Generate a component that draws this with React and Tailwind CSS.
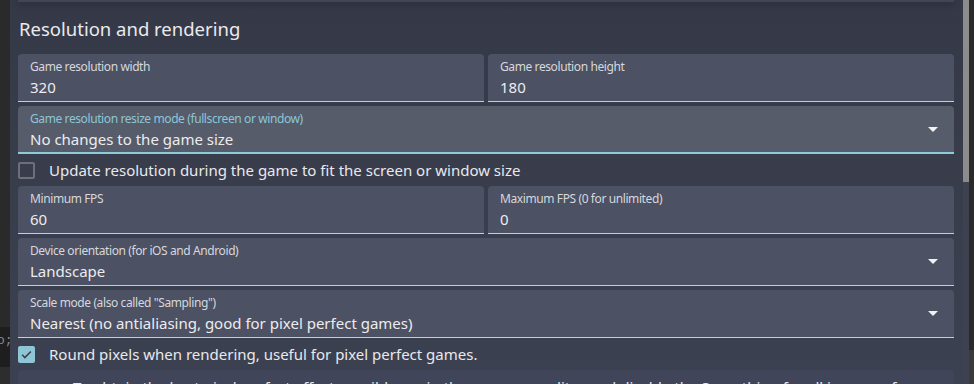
import React from "react";

const font = { fontFamily: '"Noto Sans", "Open Sans", sans-serif' };

function Field({ label, value, focused, select }) {
  return (
    <div
      className={`relative min-w-0 flex-1 h-[48px] rounded-t-[4px] px-3 pt-[5px] ${
        focused
          ? "bg-[#575c6b] border-b-2 border-[#8ccbd9]"
          : "bg-[#4c5163] border-b border-[#c9ccd2]"
      }`}
    >
      <div
        className={`text-[12px] leading-[16px] tracking-[-0.4px] whitespace-nowrap ${
          focused ? "text-[#8cc6d6]" : "text-[#d6d8dd]"
        }`}
      >
        {label}
      </div>
      <div className="mt-[2px] text-[15px] leading-[20px] text-[#ececee] whitespace-nowrap">
        {value}
      </div>
      {select && (
        <svg
          className="absolute right-[16px] top-[21px]"
          width="10"
          height="6"
          viewBox="0 0 10 6"
        >
          <polygon points="0,0 10,0 5,5" fill="#f2f2f2" />
        </svg>
      )}
    </div>
  );
}

function Check({ checked, label }) {
  return (
    <div className="flex h-[32px] items-center gap-[14px]">
      {checked ? (
        <div className="flex h-[17px] w-[17px] shrink-0 items-center justify-center rounded-[2px] bg-[#8fc6d5]">
          <svg width="13" height="13" viewBox="0 0 24 24">
            <path
              d="M4 12.5l5 5L20 6.5"
              fill="none"
              stroke="#3b404e"
              strokeWidth="3"
            />
          </svg>
        </div>
      ) : (
        <div className="h-[17px] w-[17px] shrink-0 rounded-[2px] border-2 border-[#6c707a]" />
      )}
      <span className="text-[15px] text-[#e8e9ec] whitespace-nowrap">
        {label}
      </span>
    </div>
  );
}

export default function App() {
  return (
    <div
      className="flex h-[384px] w-[974px] overflow-hidden bg-[#2b2b2b]"
      style={font}
    >
      {/* editor behind the dialog */}
      <div className="flex w-[10px] shrink-0 flex-col">
        <div className="h-[327px] shrink-0 bg-[#2a2a2a]" />
        <div className="h-[40px] shrink-0 overflow-hidden bg-[#1e1e1e] pt-[6px] font-mono text-[13px] leading-[16px] text-[#8a8a8a]">
          <span className="-ml-[3px]">o;</span>
        </div>
        <div className="flex-1 bg-[#2d2d2d]" />
      </div>

      <div className="flex min-w-0 flex-1 bg-gradient-to-b from-[#353947] to-[#3c4151]">
        <div className="min-w-0 flex-1 overflow-hidden pl-2 pr-[9px]">
          <div className="h-[2px] bg-[#414655] shadow-[0_2px_6px_rgba(0,0,0,0.45)]" />
          <div className="h-[52px] pt-[14px] pl-px text-[18.5px] leading-[26px] text-[#e9eaed]">
            Resolution and rendering
          </div>

          <div className="flex gap-1">
            <Field label="Game resolution width" value="320" />
            <Field label="Game resolution height" value="180" />
          </div>
          <div className="mt-1 flex">
            <Field
              label="Game resolution resize mode (fullscreen or window)"
              value="No changes to the game size"
              focused
              select
            />
          </div>
          <Check label="Update resolution during the game to fit the screen or window size" />
          <div className="flex gap-1">
            <Field label="Minimum FPS" value="60" />
            <Field label="Maximum FPS (0 for unlimited)" value="0" />
          </div>
          <div className="mt-1 flex">
            <Field
              label="Device orientation (for iOS and Android)"
              value="Landscape"
              select
            />
          </div>
          <div className="mt-1 flex">
            <Field
              label={'Scale mode (also called "Sampling")'}
              value="Nearest (no antialiasing, good for pixel perfect games)"
              select
            />
          </div>
          <Check
            checked
            label="Round pixels when rendering, useful for pixel perfect games."
          />
          <div className="h-[40px] rounded-t-[4px] bg-[#40455a] pt-[7px] pl-[55px] pr-[40px] text-[15px] leading-[20px] text-[#e8e9ec]">
            To obtain the best pixel perfect effect possible, go in the
            resources editor and disable the Smoothing for all images of your
            game.
          </div>
        </div>

        {/* scrollbar */}
        <div className="flex w-[6px] shrink-0 flex-col bg-[#3d4150]">
          <div className="h-[182px] bg-[#8c8c8c]" />
        </div>
      </div>

      <div className="flex w-[5px] shrink-0 flex-col">
        <div className="h-[350px] bg-[#2a2a2a]" />
        <div className="flex-1 bg-[#3a3a3a]" />
      </div>
    </div>
  );
}
